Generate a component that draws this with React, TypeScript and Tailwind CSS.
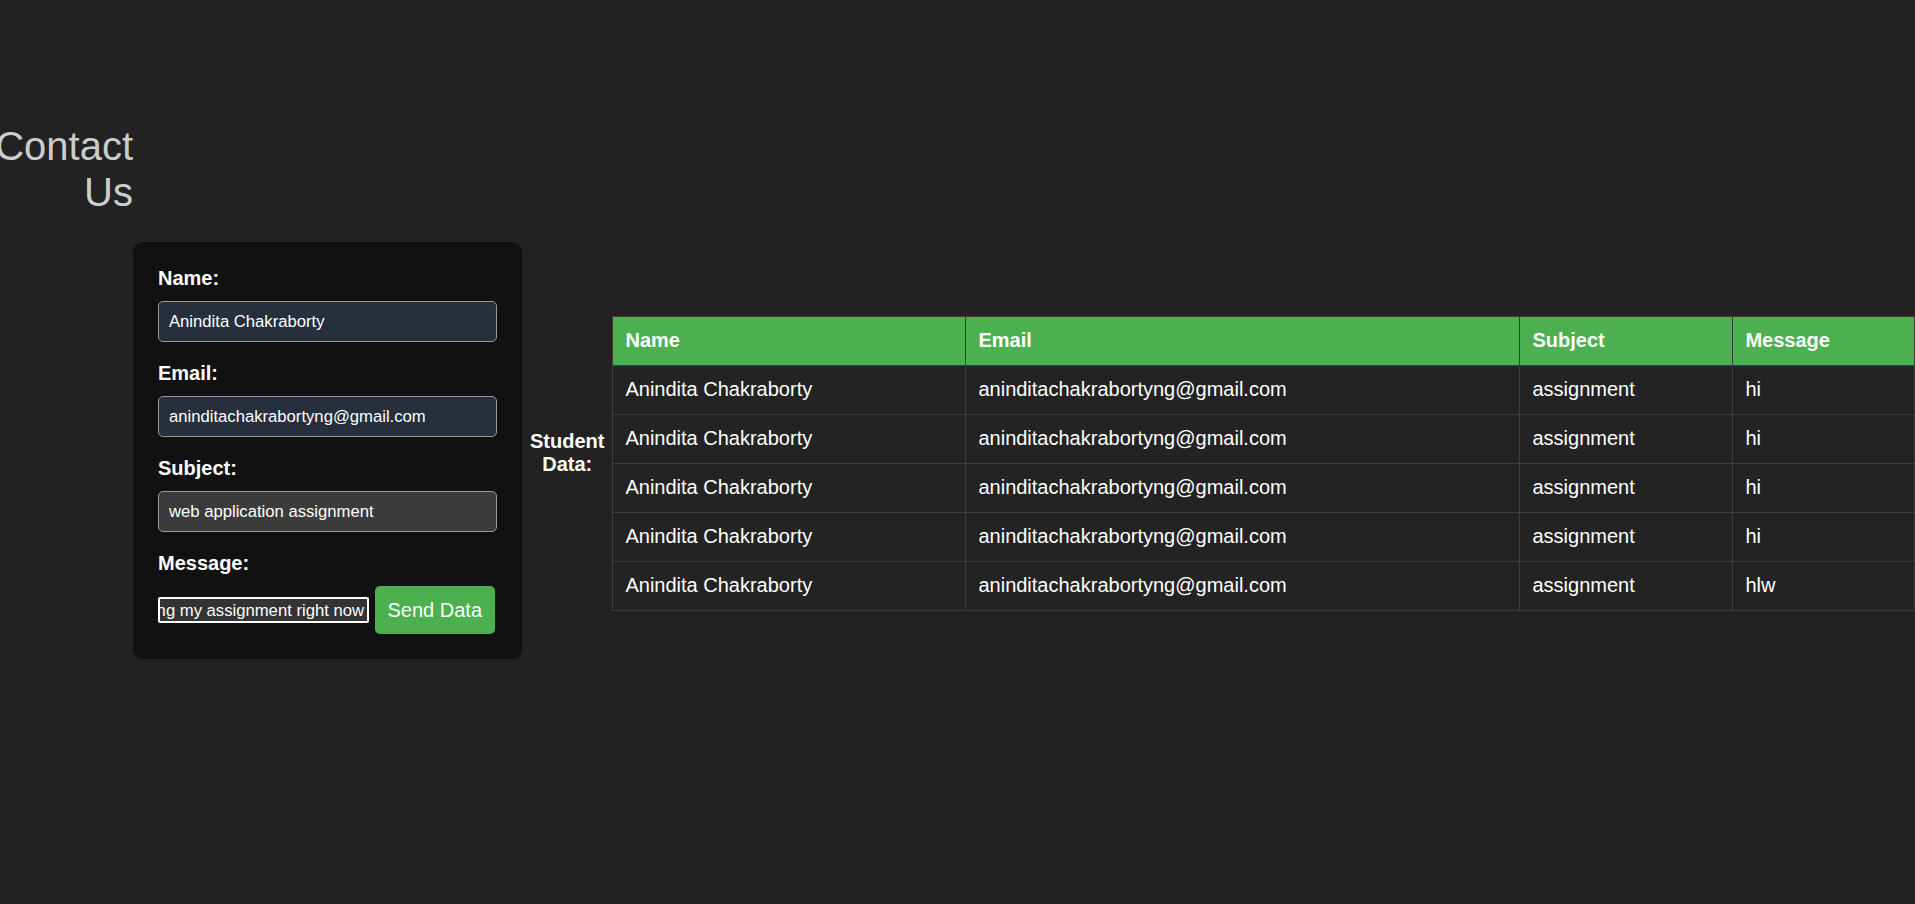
import React from 'react';

type Entry = {
  name: string;
  email: string;
  subject: string;
  message: string;
};

const entries: Entry[] = [
  { name: 'Anindita Chakraborty', email: 'aninditachakrabortyng@gmail.com', subject: 'assignment', message: 'hi' },
  { name: 'Anindita Chakraborty', email: 'aninditachakrabortyng@gmail.com', subject: 'assignment', message: 'hi' },
  { name: 'Anindita Chakraborty', email: 'aninditachakrabortyng@gmail.com', subject: 'assignment', message: 'hi' },
  { name: 'Anindita Chakraborty', email: 'aninditachakrabortyng@gmail.com', subject: 'assignment', message: 'hi' },
  { name: 'Anindita Chakraborty', email: 'aninditachakrabortyng@gmail.com', subject: 'assignment', message: 'hlw' },
];

const labelClass = 'block font-bold text-[20px] leading-[23px] mb-[11px] text-white';
const inputClass =
  'block w-full h-[41px] mb-[20px] px-[10px] rounded-[5px] border border-[#9a9a9a] text-[16.67px] text-white outline-none';

export default function App() {
  return (
    <div className="min-h-screen bg-[#222222] flex items-center overflow-hidden font-['Liberation_Sans',Arial,sans-serif] text-white">
      <h1 className="self-start mt-[123px] w-[133px] shrink-0 flex flex-col items-end text-[40px] leading-[46px] font-normal text-[#cccccc] whitespace-nowrap">
        <span>Contact</span>
        <span>Us</span>
      </h1>

      <form
        onSubmit={(e) => e.preventDefault()}
        className="w-[389px] shrink-0 mb-[3px] bg-[#111111] rounded-[10px] p-[25px]"
      >
        <label className={labelClass}>Name:</label>
        <input className={`${inputClass} bg-[#272e3c]`} defaultValue="Anindita Chakraborty" />

        <label className={labelClass}>Email:</label>
        <input className={`${inputClass} bg-[#272e3c]`} defaultValue="aninditachakrabortyng@gmail.com" />

        <label className={labelClass}>Subject:</label>
        <input className={`${inputClass} bg-[#3b3b3b]`} defaultValue="web application assignment" />

        <label className={labelClass}>Message:</label>
        <div className="flex items-center gap-[6px]">
          <div className="w-[211px] h-[26px] shrink-0 flex justify-end items-center overflow-hidden whitespace-nowrap border-2 border-white rounded-[2px] bg-[#333333] pr-[3px] text-[16.67px] leading-[19px] text-white">
            i am doing my assignment right now
          </div>
          <button
            type="submit"
            className="h-[47.5px] px-[12.5px] rounded-[5px] bg-[#4caf50] text-[20px] text-white"
          >
            Send Data
          </button>
        </div>
      </form>

      <div className="ml-[8px] mr-[7.5px] mt-[2px] w-min shrink-0 text-center font-bold text-[20px] leading-[23px]">
        Student Data:
      </div>

      <div className="flex-1 mt-[22px] min-w-0">
        <table className="w-full table-fixed border-collapse text-[20px] leading-[23px]">
          <colgroup>
            <col className="w-[353px]" />
            <col className="w-[554px]" />
            <col className="w-[213px]" />
            <col />
          </colgroup>
          <thead>
            <tr className="bg-[#4caf50]">
              <th className="p-[12.5px] text-left font-bold border border-[#3d3d3d]">Name</th>
              <th className="p-[12.5px] text-left font-bold border border-[#3d3d3d]">Email</th>
              <th className="p-[12.5px] text-left font-bold border border-[#3d3d3d]">Subject</th>
              <th className="p-[12.5px] text-left font-bold border border-[#3d3d3d]">Message</th>
            </tr>
          </thead>
          <tbody>
            {entries.map((row, i) => (
              <tr key={i} className="bg-[#232323]">
                <td className="p-[12.5px] border border-[#3d3d3d]">{row.name}</td>
                <td className="p-[12.5px] border border-[#3d3d3d]">{row.email}</td>
                <td className="p-[12.5px] border border-[#3d3d3d]">{row.subject}</td>
                <td className="p-[12.5px] border border-[#3d3d3d]">{row.message}</td>
              </tr>
            ))}
          </tbody>
        </table>
      </div>
    </div>
  );
}
